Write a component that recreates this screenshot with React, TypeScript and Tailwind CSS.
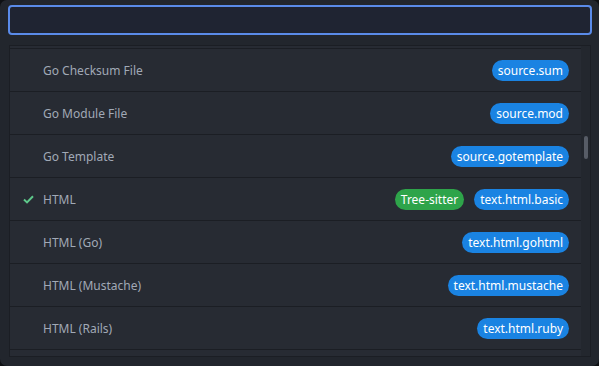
import React from "react";

type Row = { label: string; badges: { text: string; green?: boolean }[]; checked?: boolean };

const rows: Row[] = [
  { label: "Go Checksum File", badges: [{ text: "source.sum" }] },
  { label: "Go Module File", badges: [{ text: "source.mod" }] },
  { label: "Go Template", badges: [{ text: "source.gotemplate" }] },
  { label: "HTML", checked: true, badges: [{ text: "Tree-sitter", green: true }, { text: "text.html.basic" }] },
  { label: "HTML (Go)", badges: [{ text: "text.html.gohtml" }] },
  { label: "HTML (Mustache)", badges: [{ text: "text.html.mustache" }] },
  { label: "HTML (Rails)", badges: [{ text: "text.html.ruby" }] },
];

export default function App() {
  return (
    <div className="w-[599px] h-[366px] bg-[#0e1013]" style={{ fontFamily: '"Noto Sans", "Open Sans", sans-serif' }}>
      <div className="h-full rounded-[7px] bg-[#22262d] pl-[8px] pr-[7px] pt-[5px] flex flex-col">
        <div className="h-[30px] rounded-[4px] border-2 border-[#5a8be9] bg-[#1f2432]" />
        <div className="mt-[10px] ml-[1px] mr-[1px] h-[312px] border border-[#1b1e24] bg-[#272b33] flex">
          <div className="flex-1 flex flex-col">
            <div className="h-[3px] border-b border-[#1b1e24]" />
            {rows.map((r) => (
              <div key={r.label} className="h-[43px] shrink-0 border-b border-[#1b1e24] flex items-center pr-[12px] pt-[1px]">
                <div className="w-[33px] flex justify-center pl-[3px]">
                  {r.checked && (
                    <svg width="11" height="9" viewBox="0 0 11 9">
                      <path d="M1 4.6 L4 7.4 L10 1.2" fill="none" stroke="#5ec98b" strokeWidth="2" />
                    </svg>
                  )}
                </div>
                <span className="text-[12px] text-[#a1a9b6]">{r.label}</span>
                <div className="ml-auto flex gap-[10px]">
                  {r.badges.map((b) => (
                    <span
                      key={b.text}
                      className={
                        "h-[21px] flex items-center rounded-full px-[6px] text-[12px] text-white " +
                        (b.green ? "bg-[#2ea44a]" : "bg-[#1a83e2]")
                      }
                    >
                      {b.text}
                    </span>
                  ))}
                </div>
              </div>
            ))}
          </div>
          <div className="w-[9px] bg-[#23272e] flex justify-center pt-[90px]">
            <div className="w-[4px] h-[23px] rounded-full bg-[#575c66]" />
          </div>
        </div>
      </div>
    </div>
  );
}
